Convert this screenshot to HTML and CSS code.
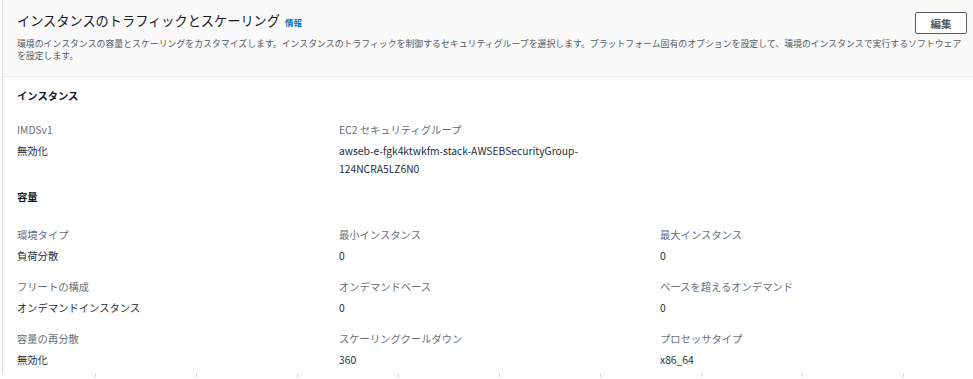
FILE: index.html
```html
<!DOCTYPE html>
<html lang="ja">
<head>
  <meta charset="UTF-8">
  <meta name="viewport" content="width=device-width, initial-scale=1.0">
  <title>インスタンスのトラフィックとスケーリング</title>
  <link rel="stylesheet" href="styles.css">
</head>
<body>
  <div class="panel">
    <div class="panel-header">
      <div class="title-row">
        <h2>インスタンスのトラフィックとスケーリング <a href="#" class="info">情報</a></h2>
        <button class="edit-btn">編集</button>
      </div>
      <p class="description">環境のインスタンスの容量とスケーリングをカスタマイズします。インスタンスのトラフィックを制御するセキュリティグループを選択します。プラットフォーム固有のオプションを設定して、環境のインスタンスで実行するソフトウェアを設定します。</p>
    </div>

    <div class="panel-body">
      <div class="section">
        <h3>インスタンス</h3>
        <div class="fields">
          <div class="field">
            <div class="label">IMDSv1</div>
            <div class="value">無効化</div>
          </div>
          <div class="field">
            <div class="label">EC2 セキュリティグループ</div>
            <div class="value">awseb-e-fgk4ktwkfm-stack-AWSEBSecurityGroup-<br>124NCRA5LZ6N0</div>
          </div>
        </div>
      </div>

      <div class="section capacity">
        <h3>容量</h3>
        <div class="fields">
          <div class="field">
            <div class="label">環境タイプ</div>
            <div class="value">負荷分散</div>
          </div>
          <div class="field">
            <div class="label">最小インスタンス</div>
            <div class="value">0</div>
          </div>
          <div class="field">
            <div class="label">最大インスタンス</div>
            <div class="value">0</div>
          </div>
          <div class="field">
            <div class="label">フリートの構成</div>
            <div class="value">オンデマンドインスタンス</div>
          </div>
          <div class="field">
            <div class="label">オンデマンドベース</div>
            <div class="value">0</div>
          </div>
          <div class="field">
            <div class="label">ベースを超えるオンデマンド</div>
            <div class="value">0</div>
          </div>
          <div class="field">
            <div class="label">容量の再分散</div>
            <div class="value">無効化</div>
          </div>
          <div class="field">
            <div class="label">スケーリングクールダウン</div>
            <div class="value">360</div>
          </div>
          <div class="field">
            <div class="label">プロセッサタイプ</div>
            <div class="value">x86_64</div>
          </div>
        </div>
      </div>
    </div>
  </div>

  <div class="ruler">
    <span></span><span></span><span></span><span></span><span></span>
    <span></span><span></span><span></span><span></span>
  </div>
</body>
</html>
```

FILE: styles.css
```css
* {
  margin: 0;
  padding: 0;
  box-sizing: border-box;
  font-family: 'Noto Sans CJK JP', 'Noto Sans', sans-serif;
}

body {
  background: #ffffff;
  color: #16191f;
  overflow: hidden;
}

.panel {
  margin-left: 2px;
  border-left: 1px solid #d5dbdb;
}

.panel-header {
  background: #fafafa;
  border-bottom: 1px solid #eaeded;
  padding: 12px 6px 14px 14px;
}

.title-row {
  display: flex;
  justify-content: space-between;
  align-items: flex-start;
  height: 22px;
}

h2 {
  font-size: 13.2px;
  font-weight: 400;
  line-height: 18px;
  color: #16191f;
}

.info {
  font-size: 8.5px;
  font-weight: 700;
  color: #0073bb;
  text-decoration: none;
  margin-left: 2px;
}

.edit-btn {
  width: 52px;
  height: 22px;
  background: #ffffff;
  border: 1px solid #545b64;
  border-radius: 2px;
  color: #545b64;
  font-size: 10.5px;
  font-weight: 700;
  cursor: pointer;
}

.description {
  margin-top: 4px;
  padding-right: 2px;
  font-size: 8.88px;
  line-height: 12px;
  color: #545b64;
}

.panel-body {
  padding: 12px 14px 4px;
}

h3 {
  font-size: 10.3px;
  font-weight: 700;
  line-height: 14px;
  margin-bottom: 19px;
}

.section + .section {
  margin-top: 12px;
}

.capacity .fields {
  padding-top: 4px;
}

.fields {
  display: grid;
  grid-template-columns: 322px 321px 1fr;
  row-gap: 14px;
}

.label {
  font-size: 10.3px;
  line-height: 16px;
  color: #687078;
}

.value {
  margin-top: 4px;
  font-size: 10.3px;
  line-height: 18px;
  color: #232f3e;
}

.ruler {
  display: flex;
  margin-left: 95px;
  height: 4px;
}

.ruler span {
  flex-shrink: 0;
  width: 101px;
  border-left: 1px solid #d5dbdb;
}
```
